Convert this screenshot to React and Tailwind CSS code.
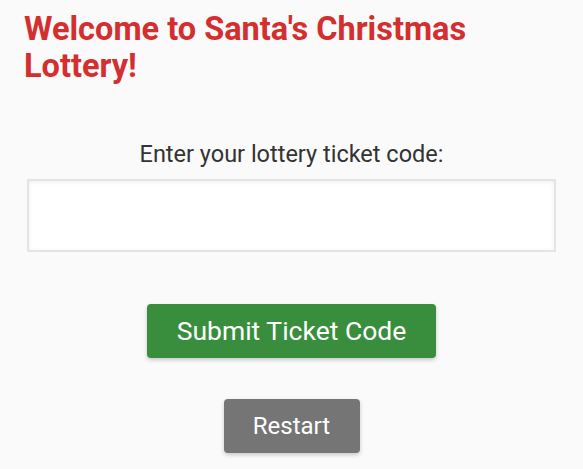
import React, { useState } from "react";

const App = () => {
  const [code, setCode] = useState("");

  return (
    <div className="min-h-[469px] bg-[#fafafa] font-['Roboto',sans-serif]">
      <div className="px-[24px] pt-[11px]">
        <h1 className="text-[32.5px] leading-[37px] font-bold text-[#d32f2f] pr-[60px]">
          Welcome to Santa's Christmas Lottery!
        </h1>
      </div>

      <div className="flex flex-col items-center mt-[55px]">
        <label className="text-[23.5px] leading-[28px] text-[#333]">
          Enter your lottery ticket code:
        </label>
        <input
          type="text"
          value={code}
          onChange={(e) => setCode(e.target.value)}
          className="mt-[11px] w-[529px] h-[73px] bg-white border-2 border-[#e4e4e4] shadow-[inset_0_1px_4px_rgba(0,0,0,0.07)] px-3 text-[20px] outline-none"
        />

        <button className="mt-[52px] w-[289px] h-[54px] rounded-[4px] bg-[#388e3c] text-white text-[26.5px] shadow-[0_2px_4px_rgba(0,0,0,0.2)]">
          Submit Ticket Code
        </button>

        <button className="mt-[41px] w-[136px] h-[54px] rounded-[4px] bg-[#757575] text-white text-[24px] shadow-[0_2px_4px_rgba(0,0,0,0.2)]">
          Restart
        </button>
      </div>
    </div>
  );
};

export default App;
